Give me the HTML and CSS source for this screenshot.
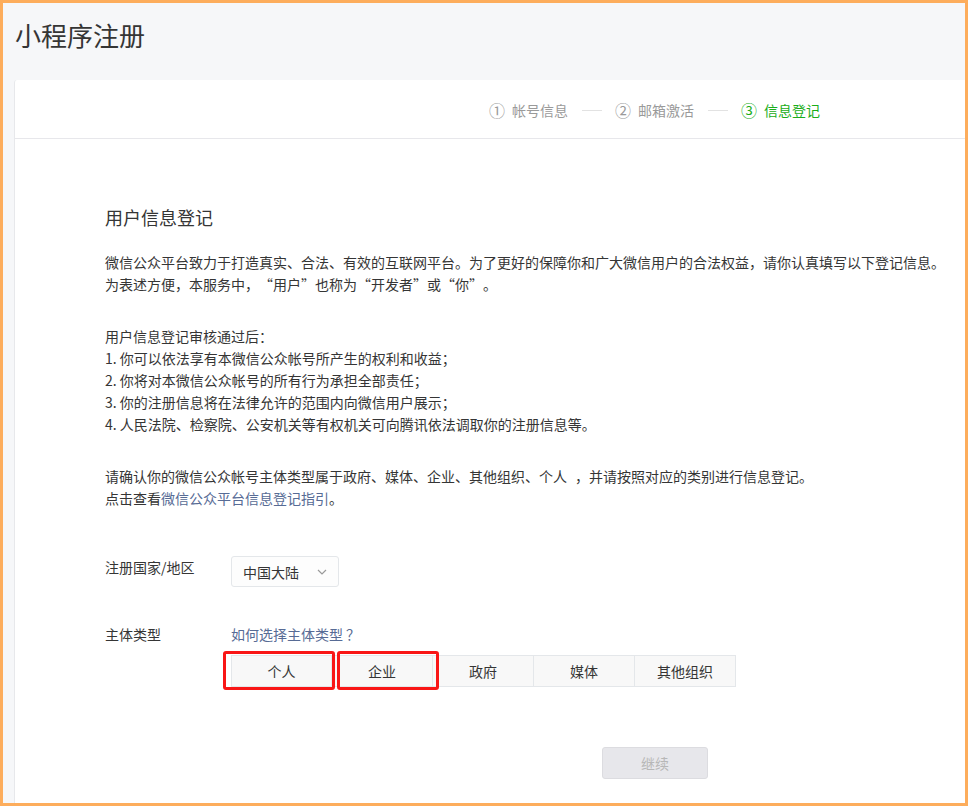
FILE: index.html
```html
<!DOCTYPE html>
<html lang="zh-CN">
<head>
<meta charset="utf-8">
<title>小程序注册</title>
<link rel="stylesheet" href="styles.css">
</head>
<body>
<div class="frame">
  <h1 class="page-title">小程序注册</h1>
  <div class="card">
    <div class="steps">
      <div class="step"><span class="num">①</span><span class="label">帐号信息</span></div>
      <span class="step-line"></span>
      <div class="step"><span class="num">②</span><span class="label">邮箱激活</span></div>
      <span class="step-line"></span>
      <div class="step step-current"><span class="num">③</span><span class="label">信息登记</span></div>
    </div>
    <div class="content">
      <h2 class="section-title">用户信息登记</h2>
      <p class="para">微信公众平台致力于打造真实、合法、有效的互联网平台。为了更好的保障你和广大微信用户的合法权益，请你认真填写以下登记信息。<br>为表述方便，本服务中，<span class="fw">“</span>用户<span class="fw">”</span>也称为<span class="fw">“</span>开发者<span class="fw">”</span>或<span class="fw">“</span>你<span class="fw">”</span>。</p>
      <p class="para">用户信息登记审核通过后：<br>1. 你可以依法享有本微信公众帐号所产生的权利和收益；<br>2. 你将对本微信公众帐号的所有行为承担全部责任；<br>3. 你的注册信息将在法律允许的范围内向微信用户展示；<br>4. 人民法院、检察院、公安机关等有权机关可向腾讯依法调取你的注册信息等。</p>
      <p class="para">请确认你的微信公众帐号主体类型属于政府、媒体、企业、其他组织、个人<span class="gap"></span>，并请按照对应的类别进行信息登记。<br>点击查看<a class="link" href="#">微信公众平台信息登记指引</a>。</p>

      <div class="form-row row-country">
        <div class="form-label">注册国家/地区</div>
        <div class="form-field">
          <div class="select">
            <span>中国大陆</span>
            <svg class="chevron" width="10" height="6" viewBox="0 0 10 6"><path d="M1 1 L5 5 L9 1" fill="none" stroke="#9a9a9a" stroke-width="1.2"/></svg>
          </div>
        </div>
      </div>

      <div class="form-row row-type">
        <div class="form-label">主体类型</div>
        <div class="form-field">
          <a class="link type-help" href="#">如何选择主体类型<span class="qm">？</span></a>
          <div class="type-group">
            <button class="type-btn">个人</button>
            <button class="type-btn">企业</button>
            <button class="type-btn">政府</button>
            <button class="type-btn">媒体</button>
            <button class="type-btn">其他组织</button>
            <span class="mark mark-1"></span>
            <span class="mark mark-2"></span>
          </div>
        </div>
      </div>

      <div class="actions">
        <button class="btn-continue" disabled>继续</button>
      </div>
    </div>
  </div>
</div>
</body>
</html>
```
FILE: styles.css
```css
* { box-sizing: border-box; }
html, body { margin: 0; padding: 0; }
body {
  font-family: "Noto Sans CJK SC", "Noto Sans", sans-serif;
  color: #353535;
  text-spacing-trim: space-all;
}
.frame {
  width: 968px;
  height: 806px;
  border: 3px solid #fdad5c;
  background: #f6f7f9;
  overflow: hidden;
}
.page-title {
  margin: 0;
  padding: 14px 0 0 12px;
  height: 77px;
  font-size: 26px;
  line-height: 36px;
  font-weight: normal;
  color: #353535;
}
.card {
  margin-left: 11px;
  width: 1000px;
  height: 740px;
  background: #fff;
  border-left: 1px solid #e7e8eb;
  border-top-left-radius: 3px;
}
.steps {
  height: 59px;
  border-bottom: 1px solid #e7e7eb;
  display: flex;
  align-items: center;
  padding-left: 474px;
  padding-top: 2px;
  font-size: 14px;
  color: #9a9a9a;
}
.step { display: flex; align-items: center; }
.step .num { font-size: 16px; margin-right: 7px; line-height: 20px; }
.step-current { color: #1aad19; }
.step-line {
  width: 20px;
  height: 1px;
  background: #e2e2e2;
  margin: 0 13px 0 14px;
}
.content {
  padding: 64px 0 0 90px;
}
.section-title {
  margin: 0;
  font-size: 18px;
  font-weight: normal;
  line-height: 28px;
}
.para {
  margin: 20px 0 0;
  font-size: 14px;
  line-height: 22px;
  white-space: pre;
}
.para + .para { margin-top: 30px; }
.fw { font-feature-settings: "fwid" 1; }
.gap { display: inline-block; width: 8px; }
.qm { margin-left: 3px; }
.link { color: #576b95; text-decoration: none; }
.form-row {
  display: flex;
  font-size: 14px;
}
.row-country { margin-top: 47px; }
.row-type { margin-top: 36px; }
.form-label {
  width: 126px;
  line-height: 22px;
}
.select {
  width: 108px;
  height: 31px;
  border: 1px solid #e4e7ea;
  border-radius: 3px;
  background: #fdfdfd;
  display: flex;
  align-items: center;
  justify-content: space-between;
  padding: 0 11px;
  color: #353535;
}
.chevron { display: block; }
.type-help { display: block; line-height: 22px; }
.type-group {
  position: relative;
  display: flex;
  margin-top: 10px;
}
.type-btn {
  width: 101px;
  height: 32px;
  margin: 0;
  border: 1px solid #e4e7ea;
  border-left: none;
  background: #f8f8f8;
  font-family: inherit;
  font-size: 14px;
  color: #353535;
  padding: 0;
}
.type-btn:first-child { border-left: 1px solid #e4e7ea; }
.mark {
  position: absolute;
  border: 3px solid #f91616;
  border-radius: 3px;
}
.mark-1 { left: -8px; top: -4px; width: 112px; height: 39px; }
.mark-2 { left: 106px; top: -4px; width: 102px; height: 39px; }
.actions {
  margin-top: 60px;
  padding-left: 497px;
}
.btn-continue {
  width: 106px;
  height: 32px;
  border: 1px solid #dcdce0;
  border-radius: 3px;
  background: #e7e7eb;
  color: #b7b7b7;
  font-family: inherit;
  font-size: 14px;
  padding: 0;
}
```
